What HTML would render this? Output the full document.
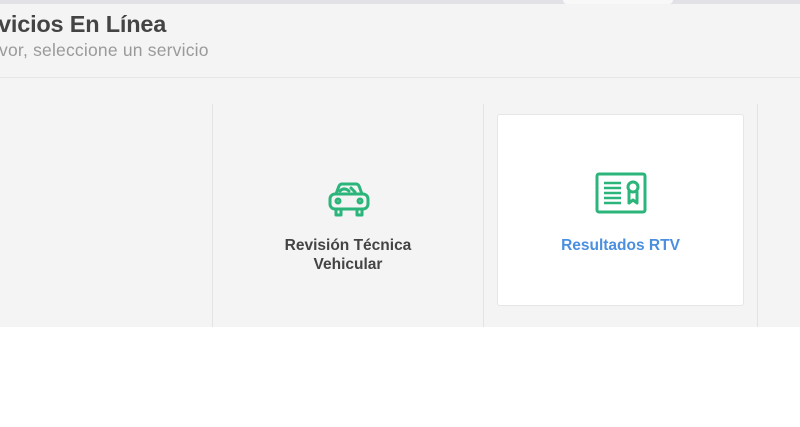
<!DOCTYPE html>
<html><head><meta charset="utf-8"><style>
body{margin:0;width:800px;height:427px;overflow:hidden;background:#fff;font-family:"Liberation Sans",sans-serif;position:relative}
.top{position:absolute;left:0;top:0;width:800px;height:327px;background:#f4f4f4}
.bar{position:absolute;left:0;top:0;width:800px;height:4px;background:#e2e2e6}
.pill{position:absolute;left:563px;top:0;width:110px;height:4px;background:#f8f8f8;border-radius:0 0 6px 6px}
h1{position:absolute;left:-2px;top:11px;margin:0;font-size:23.5px;font-weight:bold;color:#444;letter-spacing:-0.2px}
.sub{position:absolute;left:-1px;top:40px;font-size:17.5px;color:#9a9a9a;letter-spacing:0.2px}
.hr{position:absolute;left:0;top:77px;width:800px;height:1px;background:#e6e6e6}
.vl{position:absolute;top:104px;width:1px;height:223px;background:#e3e3e3}
.card{position:absolute;left:497px;top:114px;width:245px;height:190px;background:#fff;border:1px solid #e6e6e6;border-radius:3px}
.lbl{position:absolute;font-size:15.5px;font-weight:bold;text-align:center;line-height:19px}
</style></head><body>
<div class="top">
<div class="bar"></div><div class="pill"></div>
<h1>vicios En Línea</h1>
<div class="sub">vor, seleccione un servicio</div>
<div class="hr"></div>
<div class="vl" style="left:212px"></div>
<div class="vl" style="left:483px"></div>
<div class="vl" style="left:757px"></div>
<div class="card"></div>
<svg style="position:absolute;left:327px;top:182px" width="44" height="36" viewBox="0 0 44 36" fill="none" stroke="#2bb57a" stroke-width="3" stroke-linejoin="round" stroke-linecap="round">
<path d="M9 12 L12 4 Q13 2 15 2 H29 Q31 2 32 4 L35 12"/>
<rect x="3" y="12" width="38" height="15" rx="5"/>
<path d="M9 27 V33 H14 V27 M30 27 V33 H35 V27"/>
<circle cx="11" cy="19" r="2"/><circle cx="33" cy="19" r="2"/>
<path d="M13 9 Q17 5 22 9 M24 6 L28 10"/>
</svg>
<div class="lbl" style="left:262px;top:236px;width:172px;color:#444">Revisión Técnica<br>Vehicular</div>
<svg style="position:absolute;left:595px;top:172px" width="52" height="42" viewBox="0 0 52 42" fill="none" stroke="#2bb57a" stroke-width="3" stroke-linejoin="round">
<rect x="2" y="2" width="48" height="38" rx="2"/>
<path d="M9 11 H26 M9 16 H26 M9 21 H26 M9 26 H26 M9 31 H26" stroke-width="2.4"/>
<circle cx="38" cy="15" r="5"/>
<path d="M34 19 V31 L38 28 L42 31 V19"/>
</svg>
<div class="lbl" style="left:497px;top:236px;width:247px;color:#4a8fe0">Resultados RTV</div>
</div>
</body></html>
